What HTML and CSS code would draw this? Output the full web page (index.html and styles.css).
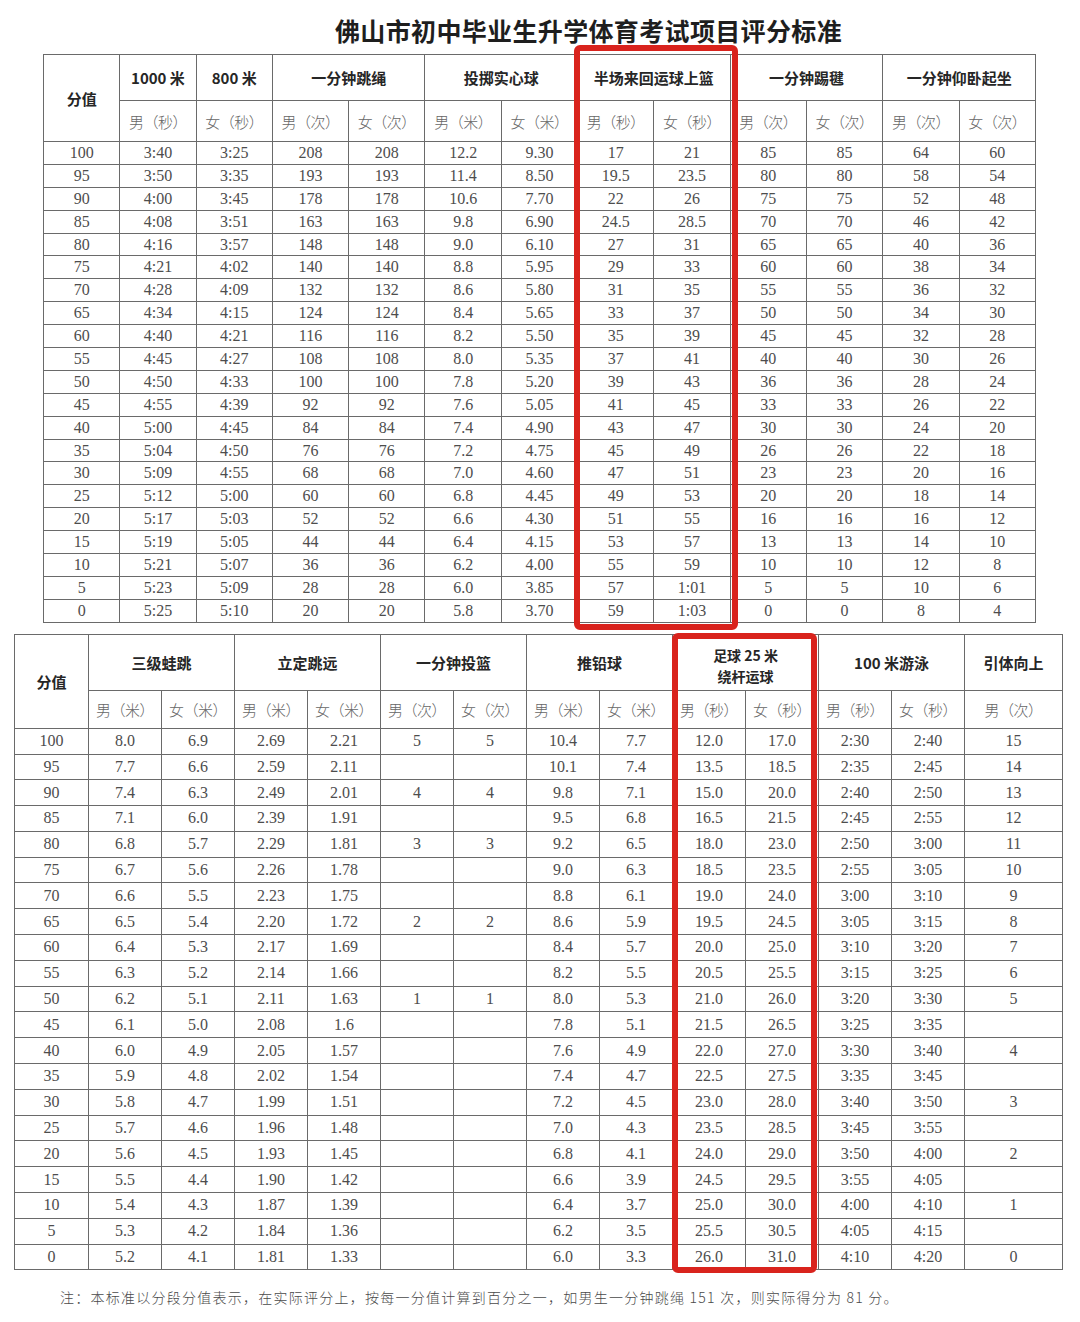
FILE: index.html
```html
<!DOCTYPE html>
<html lang="zh-CN">
<head>
<meta charset="utf-8">
<title>佛山市初中毕业生升学体育考试项目评分标准</title>
<link rel="stylesheet" href="styles.css">
</head>
<body>
<div class="sheet">
  <h1 class="title">佛山市初中毕业生升学体育考试项目评分标准</h1>

  <table class="grid t1">
    <thead>
      <tr class="r1">
        <th rowspan="2" class="h">分值</th>
        <th class="h">1000 米</th>
        <th class="h">800 米</th>
        <th colspan="2" class="h">一分钟跳绳</th>
        <th colspan="2" class="h">投掷实心球</th>
        <th colspan="2" class="h">半场来回运球上篮</th>
        <th colspan="2" class="h">一分钟踢毽</th>
        <th colspan="2" class="h">一分钟仰卧起坐</th>
      </tr>
      <tr class="r2">
        <th class="s">男（秒）</th><th class="s">女（秒）</th>
        <th class="s">男（次）</th><th class="s">女（次）</th>
        <th class="s">男（米）</th><th class="s">女（米）</th>
        <th class="s">男（秒）</th><th class="s">女（秒）</th>
        <th class="s">男（次）</th><th class="s">女（次）</th>
        <th class="s">男（次）</th><th class="s">女（次）</th>
      </tr>
    </thead>
    <tbody>
      <tr><td>100</td><td>3:40</td><td>3:25</td><td>208</td><td>208</td><td>12.2</td><td>9.30</td><td>17</td><td>21</td><td>85</td><td>85</td><td>64</td><td>60</td></tr>
      <tr><td>95</td><td>3:50</td><td>3:35</td><td>193</td><td>193</td><td>11.4</td><td>8.50</td><td>19.5</td><td>23.5</td><td>80</td><td>80</td><td>58</td><td>54</td></tr>
      <tr><td>90</td><td>4:00</td><td>3:45</td><td>178</td><td>178</td><td>10.6</td><td>7.70</td><td>22</td><td>26</td><td>75</td><td>75</td><td>52</td><td>48</td></tr>
      <tr><td>85</td><td>4:08</td><td>3:51</td><td>163</td><td>163</td><td>9.8</td><td>6.90</td><td>24.5</td><td>28.5</td><td>70</td><td>70</td><td>46</td><td>42</td></tr>
      <tr><td>80</td><td>4:16</td><td>3:57</td><td>148</td><td>148</td><td>9.0</td><td>6.10</td><td>27</td><td>31</td><td>65</td><td>65</td><td>40</td><td>36</td></tr>
      <tr><td>75</td><td>4:21</td><td>4:02</td><td>140</td><td>140</td><td>8.8</td><td>5.95</td><td>29</td><td>33</td><td>60</td><td>60</td><td>38</td><td>34</td></tr>
      <tr><td>70</td><td>4:28</td><td>4:09</td><td>132</td><td>132</td><td>8.6</td><td>5.80</td><td>31</td><td>35</td><td>55</td><td>55</td><td>36</td><td>32</td></tr>
      <tr><td>65</td><td>4:34</td><td>4:15</td><td>124</td><td>124</td><td>8.4</td><td>5.65</td><td>33</td><td>37</td><td>50</td><td>50</td><td>34</td><td>30</td></tr>
      <tr><td>60</td><td>4:40</td><td>4:21</td><td>116</td><td>116</td><td>8.2</td><td>5.50</td><td>35</td><td>39</td><td>45</td><td>45</td><td>32</td><td>28</td></tr>
      <tr><td>55</td><td>4:45</td><td>4:27</td><td>108</td><td>108</td><td>8.0</td><td>5.35</td><td>37</td><td>41</td><td>40</td><td>40</td><td>30</td><td>26</td></tr>
      <tr><td>50</td><td>4:50</td><td>4:33</td><td>100</td><td>100</td><td>7.8</td><td>5.20</td><td>39</td><td>43</td><td>36</td><td>36</td><td>28</td><td>24</td></tr>
      <tr><td>45</td><td>4:55</td><td>4:39</td><td>92</td><td>92</td><td>7.6</td><td>5.05</td><td>41</td><td>45</td><td>33</td><td>33</td><td>26</td><td>22</td></tr>
      <tr><td>40</td><td>5:00</td><td>4:45</td><td>84</td><td>84</td><td>7.4</td><td>4.90</td><td>43</td><td>47</td><td>30</td><td>30</td><td>24</td><td>20</td></tr>
      <tr><td>35</td><td>5:04</td><td>4:50</td><td>76</td><td>76</td><td>7.2</td><td>4.75</td><td>45</td><td>49</td><td>26</td><td>26</td><td>22</td><td>18</td></tr>
      <tr><td>30</td><td>5:09</td><td>4:55</td><td>68</td><td>68</td><td>7.0</td><td>4.60</td><td>47</td><td>51</td><td>23</td><td>23</td><td>20</td><td>16</td></tr>
      <tr><td>25</td><td>5:12</td><td>5:00</td><td>60</td><td>60</td><td>6.8</td><td>4.45</td><td>49</td><td>53</td><td>20</td><td>20</td><td>18</td><td>14</td></tr>
      <tr><td>20</td><td>5:17</td><td>5:03</td><td>52</td><td>52</td><td>6.6</td><td>4.30</td><td>51</td><td>55</td><td>16</td><td>16</td><td>16</td><td>12</td></tr>
      <tr><td>15</td><td>5:19</td><td>5:05</td><td>44</td><td>44</td><td>6.4</td><td>4.15</td><td>53</td><td>57</td><td>13</td><td>13</td><td>14</td><td>10</td></tr>
      <tr><td>10</td><td>5:21</td><td>5:07</td><td>36</td><td>36</td><td>6.2</td><td>4.00</td><td>55</td><td>59</td><td>10</td><td>10</td><td>12</td><td>8</td></tr>
      <tr><td>5</td><td>5:23</td><td>5:09</td><td>28</td><td>28</td><td>6.0</td><td>3.85</td><td>57</td><td>1:01</td><td>5</td><td>5</td><td>10</td><td>6</td></tr>
      <tr><td>0</td><td>5:25</td><td>5:10</td><td>20</td><td>20</td><td>5.8</td><td>3.70</td><td>59</td><td>1:03</td><td>0</td><td>0</td><td>8</td><td>4</td></tr>
    </tbody>
  </table>

  <table class="grid t2">
    <colgroup>
      <col class="c-first">
      <col class="c"><col class="c"><col class="c"><col class="c"><col class="c"><col class="c">
      <col class="c"><col class="c"><col class="c"><col class="c"><col class="c"><col class="c">
      <col class="c-last">
    </colgroup>
    <thead>
      <tr class="r1">
        <th rowspan="2" class="h">分值</th>
        <th colspan="2" class="h">三级蛙跳</th>
        <th colspan="2" class="h">立定跳远</th>
        <th colspan="2" class="h">一分钟投篮</th>
        <th colspan="2" class="h">推铅球</th>
        <th colspan="2" class="h two">足球 25 米<br>绕杆运球</th>
        <th colspan="2" class="h">100 米游泳</th>
        <th class="h">引体向上</th>
      </tr>
      <tr class="r2">
        <th class="s">男（米）</th><th class="s">女（米）</th>
        <th class="s">男（米）</th><th class="s">女（米）</th>
        <th class="s">男（次）</th><th class="s">女（次）</th>
        <th class="s">男（米）</th><th class="s">女（米）</th>
        <th class="s">男（秒）</th><th class="s">女（秒）</th>
        <th class="s">男（秒）</th><th class="s">女（秒）</th>
        <th class="s">男（次）</th>
      </tr>
    </thead>
    <tbody>
      <tr><td>100</td><td>8.0</td><td>6.9</td><td>2.69</td><td>2.21</td><td>5</td><td>5</td><td>10.4</td><td>7.7</td><td>12.0</td><td>17.0</td><td>2:30</td><td>2:40</td><td>15</td></tr>
      <tr><td>95</td><td>7.7</td><td>6.6</td><td>2.59</td><td>2.11</td><td></td><td></td><td>10.1</td><td>7.4</td><td>13.5</td><td>18.5</td><td>2:35</td><td>2:45</td><td>14</td></tr>
      <tr><td>90</td><td>7.4</td><td>6.3</td><td>2.49</td><td>2.01</td><td>4</td><td>4</td><td>9.8</td><td>7.1</td><td>15.0</td><td>20.0</td><td>2:40</td><td>2:50</td><td>13</td></tr>
      <tr><td>85</td><td>7.1</td><td>6.0</td><td>2.39</td><td>1.91</td><td></td><td></td><td>9.5</td><td>6.8</td><td>16.5</td><td>21.5</td><td>2:45</td><td>2:55</td><td>12</td></tr>
      <tr><td>80</td><td>6.8</td><td>5.7</td><td>2.29</td><td>1.81</td><td>3</td><td>3</td><td>9.2</td><td>6.5</td><td>18.0</td><td>23.0</td><td>2:50</td><td>3:00</td><td>11</td></tr>
      <tr><td>75</td><td>6.7</td><td>5.6</td><td>2.26</td><td>1.78</td><td></td><td></td><td>9.0</td><td>6.3</td><td>18.5</td><td>23.5</td><td>2:55</td><td>3:05</td><td>10</td></tr>
      <tr><td>70</td><td>6.6</td><td>5.5</td><td>2.23</td><td>1.75</td><td></td><td></td><td>8.8</td><td>6.1</td><td>19.0</td><td>24.0</td><td>3:00</td><td>3:10</td><td>9</td></tr>
      <tr><td>65</td><td>6.5</td><td>5.4</td><td>2.20</td><td>1.72</td><td>2</td><td>2</td><td>8.6</td><td>5.9</td><td>19.5</td><td>24.5</td><td>3:05</td><td>3:15</td><td>8</td></tr>
      <tr><td>60</td><td>6.4</td><td>5.3</td><td>2.17</td><td>1.69</td><td></td><td></td><td>8.4</td><td>5.7</td><td>20.0</td><td>25.0</td><td>3:10</td><td>3:20</td><td>7</td></tr>
      <tr><td>55</td><td>6.3</td><td>5.2</td><td>2.14</td><td>1.66</td><td></td><td></td><td>8.2</td><td>5.5</td><td>20.5</td><td>25.5</td><td>3:15</td><td>3:25</td><td>6</td></tr>
      <tr><td>50</td><td>6.2</td><td>5.1</td><td>2.11</td><td>1.63</td><td>1</td><td>1</td><td>8.0</td><td>5.3</td><td>21.0</td><td>26.0</td><td>3:20</td><td>3:30</td><td>5</td></tr>
      <tr><td>45</td><td>6.1</td><td>5.0</td><td>2.08</td><td>1.6</td><td></td><td></td><td>7.8</td><td>5.1</td><td>21.5</td><td>26.5</td><td>3:25</td><td>3:35</td><td></td></tr>
      <tr><td>40</td><td>6.0</td><td>4.9</td><td>2.05</td><td>1.57</td><td></td><td></td><td>7.6</td><td>4.9</td><td>22.0</td><td>27.0</td><td>3:30</td><td>3:40</td><td>4</td></tr>
      <tr><td>35</td><td>5.9</td><td>4.8</td><td>2.02</td><td>1.54</td><td></td><td></td><td>7.4</td><td>4.7</td><td>22.5</td><td>27.5</td><td>3:35</td><td>3:45</td><td></td></tr>
      <tr><td>30</td><td>5.8</td><td>4.7</td><td>1.99</td><td>1.51</td><td></td><td></td><td>7.2</td><td>4.5</td><td>23.0</td><td>28.0</td><td>3:40</td><td>3:50</td><td>3</td></tr>
      <tr><td>25</td><td>5.7</td><td>4.6</td><td>1.96</td><td>1.48</td><td></td><td></td><td>7.0</td><td>4.3</td><td>23.5</td><td>28.5</td><td>3:45</td><td>3:55</td><td></td></tr>
      <tr><td>20</td><td>5.6</td><td>4.5</td><td>1.93</td><td>1.45</td><td></td><td></td><td>6.8</td><td>4.1</td><td>24.0</td><td>29.0</td><td>3:50</td><td>4:00</td><td>2</td></tr>
      <tr><td>15</td><td>5.5</td><td>4.4</td><td>1.90</td><td>1.42</td><td></td><td></td><td>6.6</td><td>3.9</td><td>24.5</td><td>29.5</td><td>3:55</td><td>4:05</td><td></td></tr>
      <tr><td>10</td><td>5.4</td><td>4.3</td><td>1.87</td><td>1.39</td><td></td><td></td><td>6.4</td><td>3.7</td><td>25.0</td><td>30.0</td><td>4:00</td><td>4:10</td><td>1</td></tr>
      <tr><td>5</td><td>5.3</td><td>4.2</td><td>1.84</td><td>1.36</td><td></td><td></td><td>6.2</td><td>3.5</td><td>25.5</td><td>30.5</td><td>4:05</td><td>4:15</td><td></td></tr>
      <tr><td>0</td><td>5.2</td><td>4.1</td><td>1.81</td><td>1.33</td><td></td><td></td><td>6.0</td><td>3.3</td><td>26.0</td><td>31.0</td><td>4:10</td><td>4:20</td><td>0</td></tr>
    </tbody>
  </table>

  <p class="note">注：本标准以分段分值表示，在实际评分上，按每一分值计算到百分之一，如男生一分钟跳绳 151 次，则实际得分为 81 分。</p>

  <div class="mark mark-1"></div>
  <div class="mark mark-2"></div>
</div>
</body>
</html>
```

FILE: styles.css
```css
html, body {
  margin: 0;
  padding: 0;
  background: #ffffff;
}

.sheet {
  position: relative;
  width: 1080px;
  height: 1322px;
  overflow: hidden;
  font-family: "Liberation Serif", "Noto Sans CJK SC", serif;
  color: #4a4a4a;
}

.title {
  margin: 0;
  padding: 15px 0 0 335px;
  height: 54px;
  box-sizing: border-box;
  font-family: "Noto Sans CJK SC", sans-serif;
  font-weight: 700;
  font-size: 25px;
  line-height: 30px;
  letter-spacing: 0.35px;
  color: #1e1e1e;
}

.grid {
  border-collapse: collapse;
  table-layout: fixed;
  border: 1.5px solid #6a6a6a;
}

.grid th,
.grid td {
  border: 1px solid #6a6a6a;
  padding: 0;
  text-align: center;
  vertical-align: middle;
  overflow: hidden;
  white-space: nowrap;
}

.grid th.h {
  font-family: "Noto Sans CJK SC", sans-serif;
  font-weight: 700;
  font-size: 15px;
  color: #262626;
}

.grid th.h.two {
  padding-top: 7px;
  font-size: 14px;
  line-height: 20.5px;
  white-space: normal;
}

.grid th.s {
  font-family: "Noto Sans CJK SC", sans-serif;
  font-weight: 300;
  font-size: 15px;
  color: #666666;
  letter-spacing: -0.5px;
}

.grid td {
  font-family: "Liberation Serif", serif;
  font-size: 16px;
  color: #4d4d4d;
}

/* table 1 */
.t1 {
  margin: 0 0 0 43px;
  width: 993px;
}

.t1 .r1 { height: 46px; }
.t1 .r2 { height: 41px; }
.t1 tbody tr { height: 22.9px; }
.t1 tbody td { line-height: 20px; }

/* table 2 */
.t2 {
  margin: 11px 0 0 14px;
  width: 1048px;
}

.t2 .c-first { width: 74px; }
.t2 .c { width: 73px; }
.t2 .c-last { width: 98px; }

.t2 .r1 { height: 56px; }
.t2 .r2 { height: 38px; }
.t2 tbody tr { height: 25.8px; }
.t2 tbody td { line-height: 22px; }

.note {
  margin: 17px 0 0 60px;
  font-family: "Noto Sans CJK SC", sans-serif;
  font-weight: 300;
  font-size: 14px;
  line-height: 20px;
  letter-spacing: 1.25px;
  color: #4a4a4a;
}

/* red highlight boxes drawn over the tables */
.mark {
  position: absolute;
  box-sizing: border-box;
  border: 6px solid #d9231d;
  border-radius: 6px;
  pointer-events: none;
}

.mark-1 {
  left: 574px;
  top: 45px;
  width: 164px;
  height: 585px;
}

.mark-2 {
  left: 672px;
  top: 633px;
  width: 145px;
  height: 640px;
}
```
